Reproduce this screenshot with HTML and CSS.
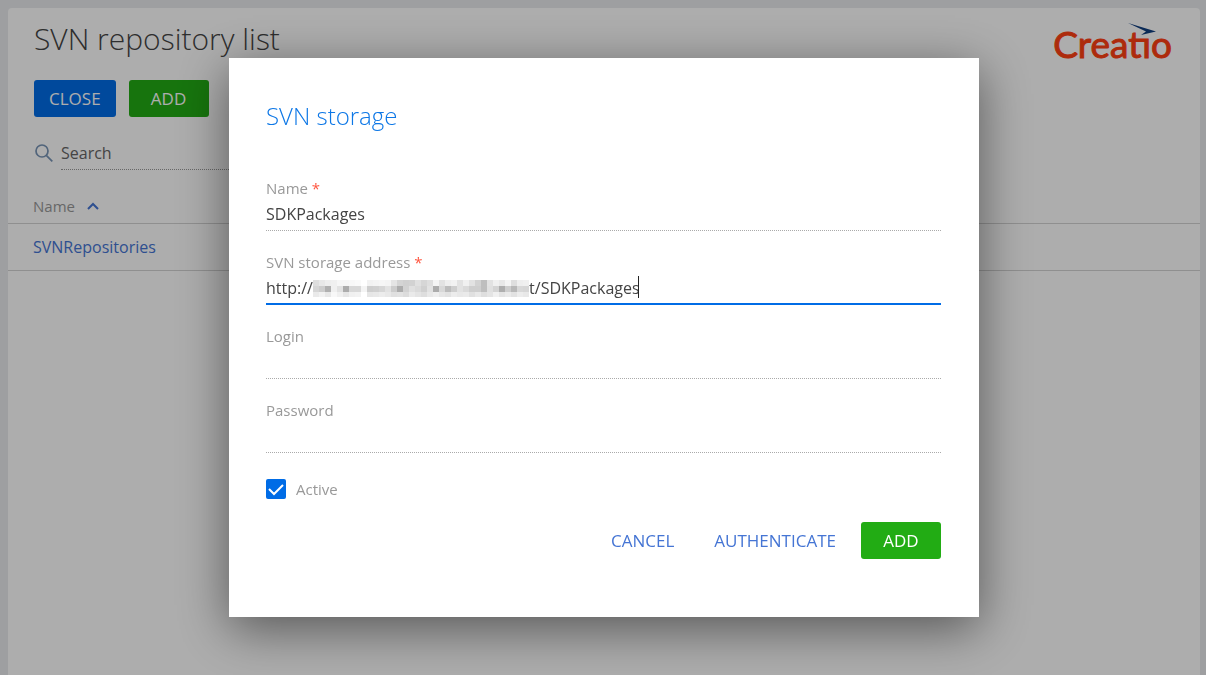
FILE: index.html
```html
<!DOCTYPE html>
<html lang="en">
<head>
<meta charset="utf-8">
<title>SVN repository list</title>
<link rel="stylesheet" href="styles.css">
</head>
<body>
<main class="page">
  <header class="page-header">
    <h1 class="page-title">SVN repository list</h1>
    <div class="brand" role="img" aria-label="Creatio">Creatıo
      <svg class="brand-arrow" viewBox="0 0 28 12" aria-hidden="true"><path fill="#103f80" d="M0 0 28 8.5 13 12 18 8.5Z"/></svg>
    </div>
  </header>
  <div class="toolbar">
    <button type="button" class="button button-blue">CLOSE</button>
    <button type="button" class="button button-green">ADD</button>
  </div>
  <div class="search">
    <svg class="search-icon" viewBox="0 0 18 18" fill="none" stroke="#7894b5" stroke-width="1.7" aria-hidden="true"><circle cx="7" cy="7" r="6"/><path d="m11.3 11.3 6 6"/></svg>
    <input class="search-input" type="text" placeholder="Search" aria-label="Search">
  </div>
  <table class="grid">
    <thead><tr><th scope="col">Name<svg class="sort" viewBox="0 0 12 8" fill="none" stroke="#4575d4" stroke-width="2" aria-hidden="true"><path d="m1 7 5-5 5 5"/></svg></th></tr></thead>
    <tbody><tr><td><a href="#">SVNRepositories</a></td></tr></tbody>
  </table>
</main>
<div class="overlay">
  <form class="dialog" role="dialog" aria-labelledby="dialog-title">
    <h2 class="dialog-title" id="dialog-title">SVN storage</h2>
    <div class="field">
      <label for="name">Name <span class="required">*</span></label>
      <input id="name" type="text" value="SDKPackages">
    </div>
    <div class="field field-active">
      <label for="address">SVN storage address <span class="required">*</span></label>
      <input id="address" type="text" value="http://&nbsp;&nbsp;&nbsp;&nbsp;&nbsp;&nbsp;&nbsp;&nbsp;&nbsp;&nbsp;&nbsp;&nbsp;&nbsp;&nbsp;&nbsp;&nbsp;&nbsp;&nbsp;&nbsp;&nbsp;&nbsp;&nbsp;&nbsp;&nbsp;&nbsp;&nbsp;&nbsp;&nbsp;&nbsp;&nbsp;&nbsp;&nbsp;&nbsp;&nbsp;&nbsp;&nbsp;&nbsp;&nbsp;&nbsp;&nbsp;&nbsp;&nbsp;&nbsp;&nbsp;&nbsp;&nbsp;&nbsp;&nbsp;&nbsp;&nbsp;&nbsp;&nbsp;t/SDKPackages">
      <svg class="mosaic" viewBox="0 0 216 17" shape-rendering="crispEdges" aria-hidden="true"></svg>
      <span class="caret"></span>
    </div>
    <div class="field">
      <label for="login">Login</label>
      <input id="login" type="text">
    </div>
    <div class="field">
      <label for="password">Password</label>
      <input id="password" type="password">
    </div>
    <div class="check">
      <input id="active" type="checkbox" checked>
      <svg class="tick" viewBox="0 0 20 20" fill="none" stroke="#fff" stroke-width="2" aria-hidden="true"><path d="m3 10 5 5 9-9"/></svg>
      <label for="active">Active</label>
    </div>
    <div class="actions">
      <button type="button" class="button button-text">CANCEL</button>
      <button type="button" class="button button-text">AUTHENTICATE</button>
      <button type="submit" class="button button-green">ADD</button>
    </div>
  </form>
</div>
<script src="mosaic.js"></script>
</body>
</html>
```
FILE: styles.css
```css
* { box-sizing: border-box; }
body {
  margin: 0;
  min-height: 100vh;
  display: flex;
  padding: 8px 6px 0 8px;
  background: #e9ebee;
  font-family: "Open Sans", "Noto Sans", sans-serif;
  font-size: 16px;
  color: #444;
}
button, input { font: inherit; }
h1, h2 { margin: 0; font-weight: 300; }

.page { flex: 1; background: #fff; border-radius: 4px 4px 0 0; }
.page-header { display: flex; justify-content: space-between; padding: 8px 28px 0 26px; height: 72px; }
.page-title { font-size: 30px; line-height: 46px; }
.brand {
  position: relative;
  font-family: Lato, sans-serif;
  font-size: 37px;
  line-height: 56px;
  color: #ff4013;
  -webkit-text-stroke: 1px #ff4013;
}
.brand-arrow { position: absolute; top: 7px; right: 16px; width: 28px; height: 12px; }
.toolbar { display: flex; gap: 13px; padding-left: 26px; }
.button {
  height: 37px;
  min-width: 80px;
  padding: 0 15px;
  border: 0;
  border-radius: 3px;
  color: #fff;
  font-size: 17px;
  line-height: 37px;
}
.button-blue { background: #006ce6; }
.button-green { background: #22ac14; }
.button-text { background: none; color: #4575d4; min-width: 0; }

.search { display: flex; align-items: center; gap: 8px; margin-top: 19px; padding-left: 27px; }
.search-icon { width: 18px; height: 18px; }
.search-input { width: 320px; height: 34px; border: 0; border-bottom: 1px dotted #999; padding: 0; background: none; }
.search-input::placeholder { color: #666; opacity: 1; }
.grid { width: 100%; margin-top: 19px; border-spacing: 0; text-align: left; }
.grid th { height: 35px; padding: 0 25px; border-bottom: 1px solid #d3d3d3; font-size: 15px; font-weight: 400; color: #999; }
.grid td { height: 47px; padding: 0 25px; border-bottom: 1px solid #d3d3d3; }
.grid a { color: #4575d4; text-decoration: none; }
.sort { width: 12px; height: 8px; margin-left: 12px; vertical-align: 2px; }

.overlay {
  position: fixed;
  inset: 0;
  display: flex;
  align-items: center;
  justify-content: center;
  padding-left: 2px;
  background: rgba(0, 0, 0, 0.32);
}
.dialog {
  width: 750px;
  padding: 40px 38px 58px 37px;
  background: #fff;
  box-shadow: 0 12px 48px rgba(0, 0, 0, 0.5);
}
.dialog-title { margin-bottom: 44px; font-size: 24px; line-height: 36px; color: #0d77e6; }
.field { position: relative; display: flex; flex-direction: column; margin-bottom: 21px; }
.field label { font-size: 15px; line-height: 20px; color: #999; }
.required { color: #ff5640; }
.field input { width: 100%; height: 33px; padding: 0; border: 0; border-bottom: 1px dotted #aaa; outline: 0; background: none; color: #444; }
.field-active input { border-bottom: 2px solid #006ce6; }
.mosaic { position: absolute; left: 47px; top: 28px; width: 216px; height: 17px; }
.caret { position: absolute; left: 372px; top: 24px; width: 1px; height: 22px; background: #222; }
.check { position: relative; display: flex; align-items: center; gap: 10px; margin: 26px 0 23px; }
.check input { appearance: none; width: 20px; height: 20px; margin: 0; border-radius: 2px; background: #006ce6; }
.check label { font-size: 15px; line-height: 20px; color: #999; }
.tick { position: absolute; left: 0; top: 0; width: 20px; height: 20px; }
.actions { display: flex; justify-content: flex-end; gap: 10px; }
```
FILE: mosaic.js
```js
// Greyed-out censor blocks drawn over the private part of the address.
const rows = [
  [222,232,238,240,246,246,248,250,255,242,244,246,244,228,212,208,210,224,214,222,244,226,238,242,226,240,226,210,190,226,240,232,244,222,238,240],
  [214,205,176,240,226,172,216,216,244,206,208,214,226,204,172,210,224,218,208,226,172,216,188,206,226,218,206,206,190,224,212,174,206,184,216,214],
  [234,242,232,248,240,230,240,242,255,230,232,236,232,224,226,220,234,228,222,232,238,230,226,236,232,234,224,232,222,228,240,228,234,226,236,232]
];
const svg = document.querySelector(".mosaic");
rows.forEach((row, y) => row.forEach((v, x) => {
  const r = document.createElementNS("http://www.w3.org/2000/svg", "rect");
  r.setAttribute("x", x * 6);
  r.setAttribute("y", y * 6);
  r.setAttribute("width", 6);
  r.setAttribute("height", 6);
  r.setAttribute("fill", `rgb(${v},${v},${v})`);
  svg.append(r);
}));
```
